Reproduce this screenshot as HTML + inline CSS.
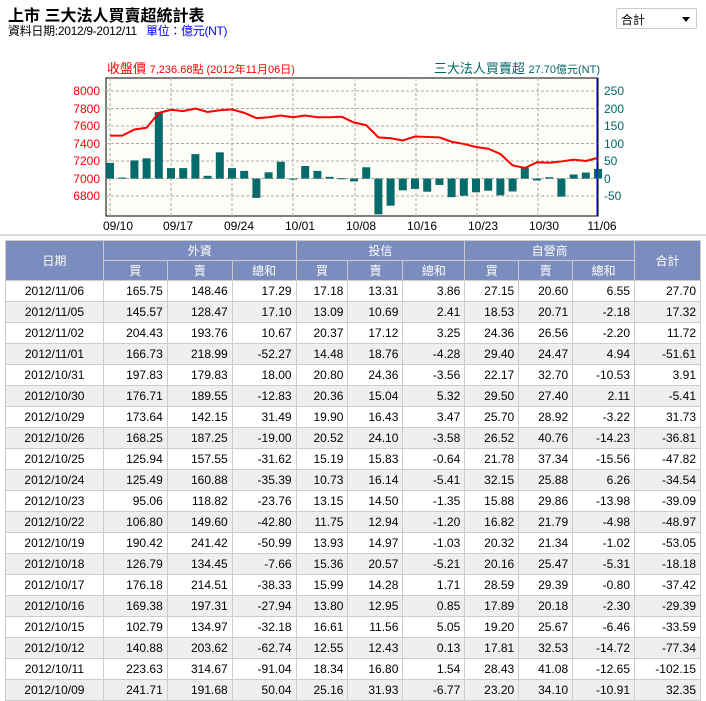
<!DOCTYPE html><html><head><meta charset="utf-8"><style>
body{margin:0;width:706px;height:701px;overflow:hidden;background:#fff;font-family:"Liberation Sans","Noto Sans CJK TC",sans-serif;position:relative}
.t{position:absolute;left:8px;top:2px;font-size:16px;font-weight:bold;color:#000}
.s{position:absolute;left:8px;top:22px;font-size:12px;letter-spacing:-0.3px}
.sel{position:absolute;left:616px;top:8px;width:81px;height:21px;border:1px solid #ccc;font-size:12px;box-sizing:border-box;padding:2px 4px;border-radius:2px}
.sel:after{content:"";position:absolute;right:6px;top:8px;border:4px solid transparent;border-top:5px solid #000}
table{position:absolute;left:5px;top:240px;border-collapse:collapse;width:696px;font-size:12px;font-family:"Liberation Sans","Noto Sans CJK TC",sans-serif}
th{background:#7b8cbe;color:#fff;font-weight:normal;border:1px solid #ccc;height:19px;padding:0}
td{border:1px solid #ccc;height:20px;padding:0 4px;text-align:right;white-space:nowrap}
td:first-child{text-align:center}
tr:nth-child(even) td{background:#efefef}
</style></head><body>
<div class="t">上市 三大法人買賣超統計表</div>
<div class="s">資料日期:2012/9-2012/11 &nbsp;&nbsp;<span style="color:#00f">單位：億元(NT)</span></div>
<div class="sel">合計</div>
<svg width="706" height="240" style="position:absolute;left:0;top:0" font-family="Liberation Sans,Noto Sans CJK TC,sans-serif" font-size="12">
<text x="107" y="73" fill="#f00" font-size="13">收盤價 <tspan font-size="11">7,236.68點 (2012年11月06日)</tspan></text>
<text x="600" y="73" fill="#066" font-size="13" text-anchor="end">三大法人買賣超 <tspan font-size="11">27.70億元(NT)</tspan></text>
<rect x="106" y="78" width="492" height="138" fill="#fefcf6" stroke="#000"/>
<g id="g" stroke="#aaa" stroke-dasharray="3,2"></g>
<g id="bars" fill="#076b6b"></g>
<polyline id="pl" fill="none" stroke="#f00" stroke-width="2"/>
<line x1="597" y1="78" x2="597" y2="216" stroke="#00f"/>
<g fill="#f00" text-anchor="end"><text x="100" y="95">8000</text><text x="100" y="113">7800</text><text x="100" y="130">7600</text><text x="100" y="148">7400</text><text x="100" y="165">7200</text><text x="100" y="183">7000</text><text x="100" y="200">6800</text></g>
<g fill="#066"><text x="604" y="95">250</text><text x="604" y="113">200</text><text x="604" y="130">150</text><text x="604" y="148">100</text><text x="604" y="165">50</text><text x="604" y="183">0</text><text x="604" y="200">-50</text></g>
<g fill="#000" text-anchor="middle"><text x="118" y="230">09/10</text><text x="178" y="230">09/17</text><text x="239" y="230">09/24</text><text x="300" y="230">10/01</text><text x="361" y="230">10/08</text><text x="422" y="230">10/16</text><text x="483" y="230">10/23</text><text x="544" y="230">10/30</text><text x="602" y="230">11/06</text></g>
<line x1="0" y1="235" x2="706" y2="235" stroke="#ddd" stroke-width="2"/>
</svg>
<script>
var P=[7490,7490,7560,7580,7750,7785,7770,7800,7760,7780,7790,7750,7690,7700,7720,7700,7720,7700,7700,7705,7640,7610,7470,7460,7435,7480,7475,7470,7420,7395,7360,7340,7280,7150,7120,7185,7180,7195,7215,7200,7237];
var B=[45,3,52,58,190,30,30,70,8,75,30,22,-55,18,48,-3,36,22,5,1,-8,32.35,-102.15,-77.34,-33.59,-29.39,-37.42,-18.18,-53.05,-48.97,-39.09,-34.54,-47.82,-36.81,31.73,-5.41,3.91,-51.61,11.72,17.32,27.7];
var ns="http://www.w3.org/2000/svg",g=document.getElementById('g'),b=document.getElementById('bars'),pts=[];
[91,108.5,126,143.5,161,178.5,196].forEach(function(y){var l=document.createElementNS(ns,'line');l.setAttribute('x1',106);l.setAttribute('x2',598);l.setAttribute('y1',y);l.setAttribute('y2',y);g.appendChild(l)});
[110,171,232,293,355,416,477,538].forEach(function(x){var l=document.createElementNS(ns,'line');l.setAttribute('x1',x);l.setAttribute('x2',x);l.setAttribute('y1',78);l.setAttribute('y2',216);g.appendChild(l)});
for(var i=0;i<41;i++){var x=110+12.2*i;pts.push(x+','+(178.5-(P[i]-7000)*0.0875));
var y=178.6-B[i]*0.35,y0=Math.min(y,178.6),y1=Math.min(Math.max(y,178.6),216);
var r=document.createElementNS(ns,'rect');r.setAttribute('x',x-4);r.setAttribute('width',8);r.setAttribute('y',y0);r.setAttribute('height',Math.max(y1-y0,1));b.appendChild(r)}
document.getElementById('pl').setAttribute('points',pts.join(' '));
</script>
<table>
<colgroup><col style="width:98px"><col style="width:64px"><col style="width:65px"><col style="width:64px"><col style="width:52px"><col style="width:55px"><col style="width:62px"><col style="width:54px"><col style="width:54px"><col style="width:62px"><col style="width:66px"></colgroup>
<tr><th rowspan="2">日期</th><th colspan="3">外資</th><th colspan="3">投信</th><th colspan="3">自營商</th><th rowspan="2">合計</th></tr>
<tr><th>買</th><th>賣</th><th>總和</th><th>買</th><th>賣</th><th>總和</th><th>買</th><th>賣</th><th>總和</th></tr>
<tr><td>2012/11/06</td><td>165.75</td><td>148.46</td><td>17.29</td><td>17.18</td><td>13.31</td><td>3.86</td><td>27.15</td><td>20.60</td><td>6.55</td><td>27.70</td></tr>
<tr><td>2012/11/05</td><td>145.57</td><td>128.47</td><td>17.10</td><td>13.09</td><td>10.69</td><td>2.41</td><td>18.53</td><td>20.71</td><td>-2.18</td><td>17.32</td></tr>
<tr><td>2012/11/02</td><td>204.43</td><td>193.76</td><td>10.67</td><td>20.37</td><td>17.12</td><td>3.25</td><td>24.36</td><td>26.56</td><td>-2.20</td><td>11.72</td></tr>
<tr><td>2012/11/01</td><td>166.73</td><td>218.99</td><td>-52.27</td><td>14.48</td><td>18.76</td><td>-4.28</td><td>29.40</td><td>24.47</td><td>4.94</td><td>-51.61</td></tr>
<tr><td>2012/10/31</td><td>197.83</td><td>179.83</td><td>18.00</td><td>20.80</td><td>24.36</td><td>-3.56</td><td>22.17</td><td>32.70</td><td>-10.53</td><td>3.91</td></tr>
<tr><td>2012/10/30</td><td>176.71</td><td>189.55</td><td>-12.83</td><td>20.36</td><td>15.04</td><td>5.32</td><td>29.50</td><td>27.40</td><td>2.11</td><td>-5.41</td></tr>
<tr><td>2012/10/29</td><td>173.64</td><td>142.15</td><td>31.49</td><td>19.90</td><td>16.43</td><td>3.47</td><td>25.70</td><td>28.92</td><td>-3.22</td><td>31.73</td></tr>
<tr><td>2012/10/26</td><td>168.25</td><td>187.25</td><td>-19.00</td><td>20.52</td><td>24.10</td><td>-3.58</td><td>26.52</td><td>40.76</td><td>-14.23</td><td>-36.81</td></tr>
<tr><td>2012/10/25</td><td>125.94</td><td>157.55</td><td>-31.62</td><td>15.19</td><td>15.83</td><td>-0.64</td><td>21.78</td><td>37.34</td><td>-15.56</td><td>-47.82</td></tr>
<tr><td>2012/10/24</td><td>125.49</td><td>160.88</td><td>-35.39</td><td>10.73</td><td>16.14</td><td>-5.41</td><td>32.15</td><td>25.88</td><td>6.26</td><td>-34.54</td></tr>
<tr><td>2012/10/23</td><td>95.06</td><td>118.82</td><td>-23.76</td><td>13.15</td><td>14.50</td><td>-1.35</td><td>15.88</td><td>29.86</td><td>-13.98</td><td>-39.09</td></tr>
<tr><td>2012/10/22</td><td>106.80</td><td>149.60</td><td>-42.80</td><td>11.75</td><td>12.94</td><td>-1.20</td><td>16.82</td><td>21.79</td><td>-4.98</td><td>-48.97</td></tr>
<tr><td>2012/10/19</td><td>190.42</td><td>241.42</td><td>-50.99</td><td>13.93</td><td>14.97</td><td>-1.03</td><td>20.32</td><td>21.34</td><td>-1.02</td><td>-53.05</td></tr>
<tr><td>2012/10/18</td><td>126.79</td><td>134.45</td><td>-7.66</td><td>15.36</td><td>20.57</td><td>-5.21</td><td>20.16</td><td>25.47</td><td>-5.31</td><td>-18.18</td></tr>
<tr><td>2012/10/17</td><td>176.18</td><td>214.51</td><td>-38.33</td><td>15.99</td><td>14.28</td><td>1.71</td><td>28.59</td><td>29.39</td><td>-0.80</td><td>-37.42</td></tr>
<tr><td>2012/10/16</td><td>169.38</td><td>197.31</td><td>-27.94</td><td>13.80</td><td>12.95</td><td>0.85</td><td>17.89</td><td>20.18</td><td>-2.30</td><td>-29.39</td></tr>
<tr><td>2012/10/15</td><td>102.79</td><td>134.97</td><td>-32.18</td><td>16.61</td><td>11.56</td><td>5.05</td><td>19.20</td><td>25.67</td><td>-6.46</td><td>-33.59</td></tr>
<tr><td>2012/10/12</td><td>140.88</td><td>203.62</td><td>-62.74</td><td>12.55</td><td>12.43</td><td>0.13</td><td>17.81</td><td>32.53</td><td>-14.72</td><td>-77.34</td></tr>
<tr><td>2012/10/11</td><td>223.63</td><td>314.67</td><td>-91.04</td><td>18.34</td><td>16.80</td><td>1.54</td><td>28.43</td><td>41.08</td><td>-12.65</td><td>-102.15</td></tr>
<tr><td>2012/10/09</td><td>241.71</td><td>191.68</td><td>50.04</td><td>25.16</td><td>31.93</td><td>-6.77</td><td>23.20</td><td>34.10</td><td>-10.91</td><td>32.35</td></tr>
</table>
</body></html>
